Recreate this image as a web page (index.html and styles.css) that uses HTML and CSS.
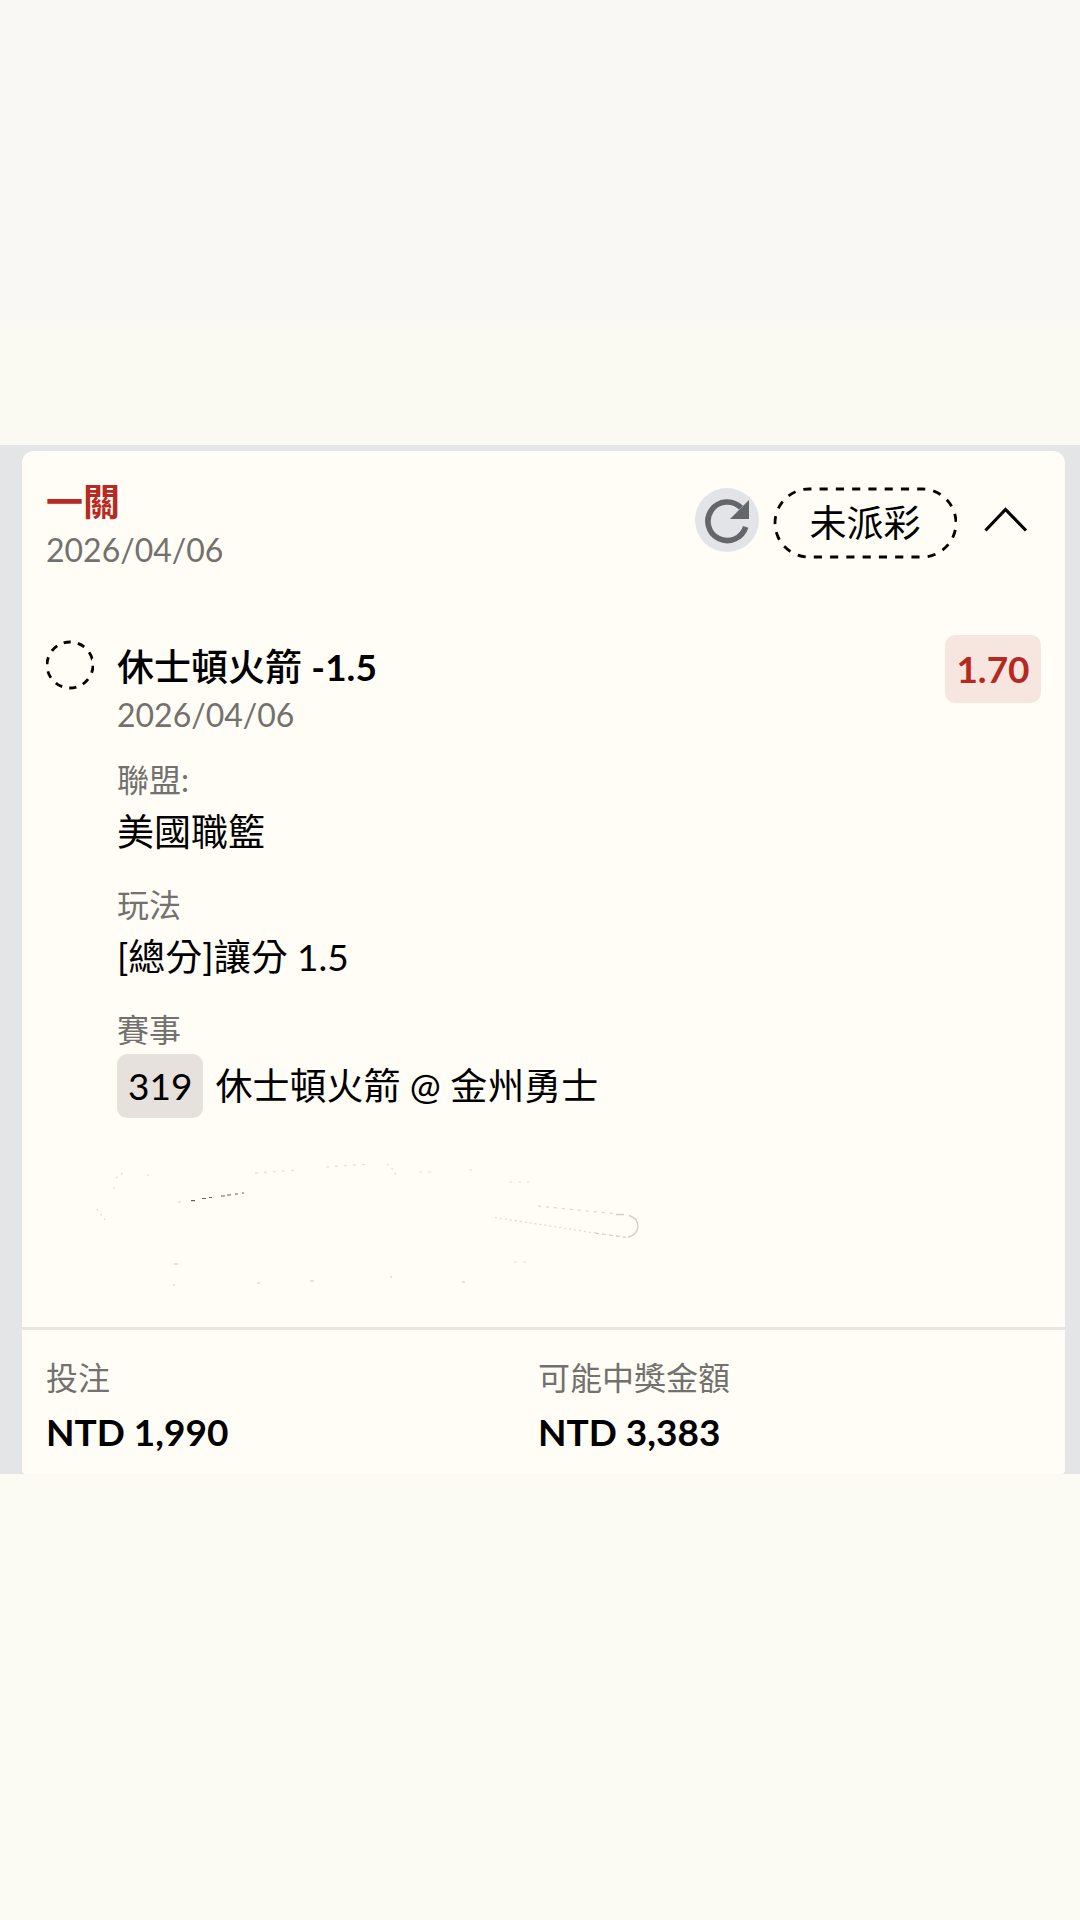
FILE: index.html
```html
<!DOCTYPE html>
<html lang="zh-Hant">
<head>
<meta charset="utf-8">
<meta name="viewport" content="width=device-width, initial-scale=1">
<title>投注紀錄</title>
<link rel="stylesheet" href="styles.css">
</head>
<body>
<div class="top-space"></div>
<main class="panel">
  <article class="card">
    <header class="card-header">
      <div>
        <h1 class="title title-red">一關</h1>
        <p class="date">2026/04/06</p>
      </div>
      <div class="actions">
        <button class="refresh" type="button" aria-label="重新整理">
          <svg width="64" height="64" viewBox="0 0 64 64" aria-hidden="true">
            <path d="M50.7 38.9A19.3 19.3 0 1 1 46 19.7" fill="none" stroke="#63666a" stroke-width="5.6"/>
            <path d="M54 12V31H35Z" fill="#63666a"/>
          </svg>
        </button>
        <span class="status">
          <svg class="status-outline" width="184" height="72" viewBox="0 0 184 72" aria-hidden="true">
            <rect x="2" y="2" width="181" height="68" rx="34" fill="none" stroke="#000" stroke-width="2.8" pathLength="270" stroke-dasharray="5 5" stroke-dashoffset="3.5"/>
          </svg>
          未派彩
        </span>
        <button class="toggle" type="button" aria-label="收合">
          <svg width="48" height="32" viewBox="0 0 48 32" aria-hidden="true">
            <path d="M3.500 26.500L23.500 5.500L44 26.500" fill="none" stroke="#000" stroke-width="3.200"/>
          </svg>
        </button>
      </div>
    </header>

    <section class="pick">
      <svg class="pending" width="48" height="50" viewBox="0 0 48 50" aria-hidden="true">
        <circle cx="24" cy="25" r="23" fill="none" stroke="#000" stroke-width="2.8" pathLength="100" stroke-dasharray="5 5" transform="rotate(-106 24 25)"/>
      </svg>
      <div class="pick-main">
        <h2 class="title">休士頓火箭 <span class="handicap">-1.5</span></h2>
        <p class="date">2026/04/06</p>
        <dl class="details">
          <div><dt>聯盟:</dt><dd>美國職籃</dd></div>
          <div><dt>玩法</dt><dd>[總分]讓分 1.5</dd></div>
          <div><dt>賽事</dt><dd class="match"><span class="match-no">319</span>休士頓火箭 @ 金州勇士</dd></div>
        </dl>
      </div>
      <strong class="odds">1.70</strong>
    </section>

    <svg class="marks" width="620" height="180" viewBox="0 0 620 180" aria-hidden="true">
      <g fill="none">
        <path d="M131 70.600h4M142 68.500h4M149 67.500h3M161 66h4M167 65h4M175 64h3M182 63h2" stroke="#65635f" stroke-width="1.200"/>
        <path d="M118 72h6M478 76L558 84" stroke="#d9d6cf" stroke-width="1.200" stroke-dasharray="3 5"/>
        <path d="M435 87.500L535 103" stroke="#dedbd4" stroke-width="1.200" stroke-dasharray="2 3"/>
        <path d="M535 103L566 107.300" stroke="#cfccc5" stroke-width="1.200" stroke-dasharray="4 3"/>
        <path d="M556 84.500h8M569 85.500Q578 88 578 96.700Q577 105 568 107.300" stroke="#d3d0ca" stroke-width="1.500"/>
        <path d="M54 59V54M56 48L63 43M37 79L45 90M87 45h4M327 34L334 40L336 46" stroke="#dedbd4" stroke-width="1.200" stroke-dasharray="2 4"/>
        <path d="M195 43L240 40M266 37L309 34M359 42h14M409 40h4M449 52h20M454 132h14" stroke="#e2dfd8" stroke-width="1.200" stroke-dasharray="3 6"/>
        <path d="M114 134h4M113 155h2M197 153h3M250 151h4M402 152h3M330 147h2" stroke="#dfdcd5" stroke-width="1.500"/>
      </g>
    </svg>

    <dl class="totals">
      <div><dt>投注</dt><dd>NTD 1,990</dd></div>
      <div><dt>可能中獎金額</dt><dd>NTD 3,383</dd></div>
    </dl>
  </article>
</main>
</body>
</html>
```
FILE: styles.css
```css
* {
  box-sizing: border-box;
}

body {
  margin: 0;
  min-height: 100vh;
  background: #fbfbf3;
  color: #000;
  font-family: Lato, "Noto Sans CJK TC", sans-serif;
  font-size: 37px;
  line-height: 48px;
}

h1, h2, p, dl, dd {
  margin: 0;
}

button {
  border: 0;
  padding: 0;
  color: inherit;
  font: inherit;
  cursor: pointer;
}

svg {
  display: block;
}

.top-space {
  height: 445px;
  background: linear-gradient(#f9f8f4 319px, #fafaf2 319px);
}

.panel {
  padding: 6px 15px 0 22px;
  background: #e3e5e7;
}

.card {
  border-radius: 12px 12px 4px 4px;
  background: #fffdf6;
}

.card-header {
  display: flex;
  justify-content: space-between;
  padding: 27px 24px 0;
}

.title {
  font-size: 37px;
  font-weight: 500;
  line-height: 48px;
}

.title-red {
  color: #b82a20;
  font-weight: 700;
}

.handicap {
  font-weight: 700;
}

.date {
  color: #73716e;
  font-size: 32px;
}

.actions {
  display: flex;
  align-items: flex-start;
  gap: 14px;
  margin-top: 9px;
}

.refresh {
  width: 64px;
  height: 64px;
  margin-top: 1px;
  border-radius: 50%;
  background: #e3e4e8;
}

.status {
  position: relative;
  display: flex;
  align-items: center;
  justify-content: center;
  width: 184px;
  height: 72px;
}

.status-outline {
  position: absolute;
  inset: 0;
}

.toggle {
  display: flex;
  align-items: center;
  justify-content: center;
  width: 70px;
  height: 66px;
  background: none;
}

.pick {
  display: flex;
  align-items: flex-start;
  padding: 61px 24px 0;
}

.pending {
  flex: none;
  margin: 5px 23px 0 0;
}

.pick-main {
  flex: 1;
  padding-top: 8px;
}

.odds {
  width: 96px;
  border-radius: 10px;
  background: #f7e6df;
  color: #b52a20;
  line-height: 68px;
  text-align: center;
}

.details {
  display: grid;
  gap: 21px;
  padding-top: 17px;
}

dt {
  color: #73716e;
  font-size: 32px;
}

dd {
  line-height: 56px;
}

.match {
  display: flex;
  align-items: center;
  gap: 12px;
}

.match-no {
  padding: 0 11px;
  border-radius: 10px;
  background: #e6e1dc;
  line-height: 64px;
}

.marks {
  max-width: 100%;
  margin: 12px 0 17px 38px;
}

.totals {
  display: grid;
  grid-template-columns: 492px 1fr;
  padding: 24px 24px 14px;
  border-top: 3px solid #e9e4df;
}

.totals dd {
  padding-top: 2px;
  font-weight: 700;
}
```
